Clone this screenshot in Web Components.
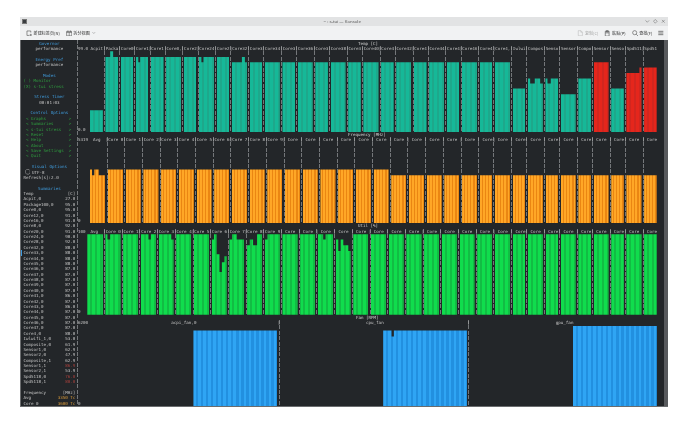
<!doctype html>
<html lang="zh">
<head>
<meta charset="utf-8">
<title>s-tui — Konsole</title>
<style>
  html, body { margin: 0; background: #fff; }
  body { font-family: "Noto Sans", "Noto Sans CJK SC", sans-serif; }
</style>
</head>
<body>
<konsole-window>
  <title-bar slot="title">~ : s-tui — Konsole</title-bar>
  <tool-bar slot="tools"></tool-bar>
  <term-view>
    <stui-sidebar slot="side"></stui-sidebar>
    <graph-panel id="temp"></graph-panel>
    <graph-panel id="freq"></graph-panel>
    <graph-panel id="util"></graph-panel>
    <graph-panel id="fan"></graph-panel>
  </term-view>
</konsole-window>

<script>
class KonsoleWindow extends HTMLElement {
  constructor() {
    super();
    this.attachShadow({ mode: 'open' });
    this.shadowRoot.innerHTML = `
      <style>
        :host {
          display: flex;
          flex-direction: column;
          width: 648px;
          height: 390px;
          margin: 17px 21px 25px 20px;
        }
      </style>
      <slot name="title"></slot>
      <slot name="tools"></slot>
      <slot></slot>
    `;
  }
}

class TitleBar extends HTMLElement {
  constructor() {
    super();
    this.attachShadow({ mode: 'open' });
    this.shadowRoot.innerHTML = `
      <style>
        :host {
          display: flex;
          align-items: center;
          justify-content: space-between;
          height: 8.5px;
          padding: 0 2px 0 2px;
          background: #e2e3e4;
          color: #555;
          font: 4.3px "Noto Sans", sans-serif;
          filter: blur(.2px);
        }
        .app { width: 5px; height: 5px; background: #3a3d40; border: .5px solid #777; box-sizing: border-box; }
        .name { flex: 1; text-align: center; padding-left: 12px; }
        .btns { display: flex; gap: 3.4px; align-items: center; }
        svg { width: 4.6px; height: 4.6px; fill: none; stroke: #555; stroke-width: 1; display: block; }
      </style>
      <div class="app"></div>
      <div class="name"><slot></slot></div>
      <div class="btns">
        <svg viewBox="0 0 10 10"><path d="M1 3l4 4 4-4"/></svg>
        <svg viewBox="0 0 10 10"><path d="M5 1l4 4-4 4-4-4z"/></svg>
        <svg viewBox="0 0 10 10"><path d="M2 2l6 6M8 2l-6 6"/></svg>
      </div>
    `;
  }
}

class ToolBar extends HTMLElement {
  constructor() {
    super();
    this.attachShadow({ mode: 'open' });
    this.shadowRoot.innerHTML = `
      <style>
        :host {
          display: flex;
          align-items: center;
          height: 14.8px;
          padding: 0 4px 0 6px;
          background: #f1f2f3;
          color: #333;
          font: 4.1px "Noto Sans CJK SC", "Noto Sans", sans-serif;
          filter: blur(.2px);
        }
        .item { display: flex; align-items: center; gap: 1.2px; }
        .gap { flex: 1; }
        .off { color: #a8a8a8; }
        svg { width: 6.4px; height: 6.4px; fill: none; stroke: #333; stroke-width: .8; display: block; }
        .off svg { stroke: #b5b5b5; }
        svg.mini { width: 3.6px; height: 3.6px; margin-left: 1.5px; }
      </style>
      <div class="item" style="margin-right:6px">
        <svg viewBox="0 0 10 10"><path d="M7.5 4V1.5h-6v7h4M7.5 6v3.5M5.8 7.8h3.4"/></svg>
        <span>新建标签页(N)</span>
      </div>
      <div class="item">
        <svg viewBox="0 0 10 10"><path d="M1 2.2h8v7H1zM1 3.8h8M5 3.8v5.4M3 .8v2M7 .8v2"/></svg>
        <span>拆分视图</span>
        <svg class="mini" viewBox="0 0 10 10"><path d="M1 3l4 4 4-4"/></svg>
      </div>
      <div class="gap"></div>
      <div class="item off" style="margin-right:6px">
        <svg viewBox="0 0 10 10"><path d="M2 1h4l2.5 2.5V9H2zM6 1v2.5h2.5"/></svg>
        <span>复制(C)</span>
      </div>
      <div class="item" style="margin-right:6px">
        <svg viewBox="0 0 10 10"><path d="M2 2h6v7.5H2zM3.5 1h3v2h-3zM2 4.5h6"/></svg>
        <span>粘贴(P)</span>
      </div>
      <div class="item" style="margin-right:6px">
        <svg viewBox="0 0 10 10"><circle cx="4.2" cy="4.2" r="3.2"/><path d="M6.6 6.6l3 3"/></svg>
        <span>查找(F)</span>
      </div>
      <svg viewBox="0 0 10 10" style="stroke-width:1.1;width:5.6px;height:6px"><path d="M.5 2h9M.5 5h9M.5 8h9"/></svg>
    `;
  }
}

class TermView extends HTMLElement {
  constructor() {
    super();
    this.attachShadow({ mode: 'open' });
    this.shadowRoot.innerHTML = `
      <style>
        :host {
          --c: 2.53px;
          --row: 5.378px;
          display: flex;
          flex: 1;
          min-height: 0;
          overflow: hidden;
          position: relative;
          background: #232629;
          color: #c4c4c4;
          font: 4.2px/5.378px "DejaVu Sans Mono", monospace;
          text-rendering: geometricPrecision;
          border-left: 1px solid #6a6c6e;
          border-bottom: 1px solid #6a6c6e;
          box-sizing: border-box;
          padding-left: 2.4px;
        }
        .inner { display: flex; flex: 1; min-width: 0; filter: blur(.22px); }
        .graphs { flex: none; width: 580px; padding-top: .3px; }
        .scroll { flex: none; width: 4.4px; margin-left: auto; background: #585a5d; }
        .mark { position: absolute; left: 0; top: 210px; width: 1.4px; height: 6px; background: #3d9be0; }
      </style>
      <div class="mark"></div>
      <div class="inner">
        <slot name="side"></slot>
        <div class="graphs"><slot></slot></div>
      </div>
      <div class="scroll"></div>
    `;
  }
}

class StuiSidebar extends HTMLElement {
  constructor() {
    super();
    this.attachShadow({ mode: 'open' });
    const title = (t) => `<div class="r c t">${t}</div>`;
    const val = (t) => `<div class="r c">${t}</div>`;
    const gap = '<div class="r"></div>';
    const menu = (t) => `<div class="r g"> &lt; ${t.padEnd(14, ' ')} &gt;</div>`;
    const pair = (a, b, cls = '') => `<div class="r p"><span>${a}</span><span class="${cls}">${b}</span></div>`;
    const temps = [
      ['Acpit,0', '27.0'], ['Package100,0', '95.0'], ['Core0,0', '95.0'], ['Core12,0', '91.0'],
      ['Core16,0', '91.0'], ['Core8,0', '92.0'], ['Core20,0', '91.0'], ['Core24,0', '90.0'],
      ['Core28,0', '92.0'], ['Core32,0', '88.0'], ['Core33,0', '88.0'], ['Core34,0', '88.0'],
      ['Core35,0', '88.0'], ['Core36,0', '87.0'], ['Core37,0', '87.0'], ['Core38,0', '87.0'],
      ['Core39,0', '87.0'], ['Core40,0', '87.0'], ['Core41,0', '86.0'], ['Core42,0', '87.0'],
      ['Core43,0', '86.0'], ['Core44,0', '87.0'], ['Core45,0', '87.0'], ['Core46,0', '87.0'],
      ['Core47,0', '87.0'], ['Core4,0', '88.0'], ['Iwlwifi_1,0', '53.0'], ['Composite,0', '61.9'],
      ['Sensor1,0', '62.9'], ['Sensor2,0', '47.9'], ['Composite,1', '62.9'], ['Sensor1,1', '86.9', 'red'],
      ['Sensor2,1', '53.9'], ['Spd5118,0', '76.0', 'red'], ['Spd5118,1', '80.0', 'red'],
    ];
    this.shadowRoot.innerHTML = `
      <style>
        :host {
          display: block;
          flex: none;
          width: 52px;
          padding-right: var(--c);
          padding-top: .3px;
          background: repeating-linear-gradient(to bottom, #74777a 0 4px, transparent 4px var(--row)) 53.3px 0 / 1px 100% no-repeat;
        }
        .r { height: var(--row); white-space: pre; }
        .c { text-align: center; }
        .t { color: #3f9bdb; }
        .g { color: #2f9e3f; }
        .p { display: flex; justify-content: space-between; }
        .red { color: #a8403c; }
        .org { color: #d99a3a; }
        .radio { display: flex; align-items: center; gap: 1.6px; padding-left: 1.4px; }
        .radio svg { width: 5.6px; height: 5.6px; fill: none; stroke: #c5c5c5; stroke-width: .8; }
      </style>
      ${title('Governor')}${val('performance')}${gap}
      ${title('Energy Pref')}${val('performance')}${gap}
      ${title('Modes')}
      <div class="r g">( ) Monitor</div>
      <div class="r g">(X) s-tui stress</div>
      ${gap}
      ${title('Stress Timer')}${val('00:01:03')}${gap}
      ${title('Control Options')}
      ${['Graphs', 'Summaries', 's-tui stress', 'Reset', 'Help', 'About', 'Save Settings', 'Quit'].map(menu).join('')}
      ${gap}
      ${title('Visual Options')}
      <div class="r radio"><svg viewBox="0 0 10 10"><path d="M3 .8h4L9.2 3v4L7 9.2H3L.8 7V3z"/></svg><span>UTF-8</span></div>
      <div class="r">Refresh[s]:2.0</div>
      ${gap}
      ${title('Summaries')}
      ${pair('Temp', '[C]')}
      ${temps.map((t) => pair(t[0], t[1], t[2] || '')).join('')}
      ${gap}
      ${pair('Frequency', '[MHz]')}
      ${pair('Avg', '3350 Tc', 'org')}
      ${pair('Core 0', '3600 Tc', 'org')}
    `;
  }
}

class GraphPanel extends HTMLElement {
  constructor() {
    super();
    this.attachShadow({ mode: 'open' });
  }

  set config(cfg) {
    this._config = cfg;
    this.render();
  }

  // steps is a list of [x, top] in px from the bar's left edge
  clip(steps, w) {
    const h = 80.67;
    const pts = [`0 ${h}px`];
    steps.forEach((s, i) => {
      const next = i + 1 < steps.length ? steps[i + 1][0] : w;
      pts.push(`${s[0]}px ${s[1]}px`, `${next}px ${s[1]}px`);
    });
    pts.push(`${w}px ${h}px`);
    return pts.join(',');
  }

  render() {
    const { title, titleX, axis, color, cols } = this._config;
    const c = 2.53;
    const html = cols.map((col, i) => {
      const steps = col.steps || [[0, col.top || 0]];
      const barW = col.barW || (col.cells * c - (i === 0 ? (col.ax || 0) + 0.35 : 2.6));
      const tone = col.color || color;
      return `
        <div class="col ${i === 0 ? 'first' : ''}" style="width:${col.cells * c}px">
          <div class="lab">${col.label}</div>
          <div class="plot">
            ${i === 0 ? `<div class="ax">${axis}</div>` : ''}
            <div class="fill ${tone}" style="width:${barW}px;clip-path:polygon(${this.clip(steps, barW)})"></div>
          </div>
        </div>`;
    }).join('');

    this.shadowRoot.innerHTML = `
      <style>
        :host { display: block; }
        .title { height: var(--row); white-space: pre; color: #d0d0d0; padding-left: ${titleX}px; }
        .cols { display: flex; height: calc(var(--row) * 16); overflow: hidden; }
        .col {
          flex: none;
          background: repeating-linear-gradient(to bottom, #74777a 0 4px, transparent 4px var(--row)) 0.8px 0 / 1px 100% no-repeat;
        }
        .col.first { background: none; }
        .lab { height: var(--row); white-space: pre; overflow: hidden; }
        .plot { height: calc(var(--row) * 15); display: flex; justify-content: flex-end; }
        .ax { margin-right: auto; align-self: flex-end; height: var(--row); white-space: pre; }
        .fill { height: 100%; flex: none; margin-right: .35px; }
        .teal { background: repeating-linear-gradient(90deg, #16b898 0 2.53px, #1ea88b 2.53px 5.06px); }
        .red { background: repeating-linear-gradient(90deg, #e5261c 0 2.53px, #d2261f 2.53px 5.06px); }
        .orange { background: repeating-linear-gradient(90deg, #ffa726 0 1.58px, #ea8612 1.58px 3.16px); }
        .green { background: repeating-linear-gradient(90deg, #10dc4d 0 2.53px, #12bc44 2.53px 5.06px); }
        .blue { background: repeating-linear-gradient(90deg, #2fa5f4 0 2.53px, #2290e0 2.53px 5.06px); }
      </style>
      <div class="title">${title}</div>
      <div class="cols">${html}</div>
    `;
  }
}

customElements.define('konsole-window', KonsoleWindow);
customElements.define('title-bar', TitleBar);
customElements.define('tool-bar', ToolBar);
customElements.define('term-view', TermView);
customElements.define('stui-sidebar', StuiSidebar);
customElements.define('graph-panel', GraphPanel);

// temp: column widths follow the label lengths (label + separator)
const tempNames = ['Packa', 'Core0', 'Core1', 'Core1', 'Core0,', 'Core2', 'Core24', 'Core2', 'Core32', 'Core3',
  'Core34', 'Core3', 'Core36', 'Core3', 'Core38', 'Core3', 'Core40', 'Core4', 'Core42', 'Core4', 'Core44', 'Core4',
  'Core46', 'Core4', 'Core4,', 'Iwlwi', 'Compos', 'Senso', 'Sensor', 'Compo', 'Sensor', 'Senso', 'Spd511', 'Spd51'];
const tempSpecial = {
  0: { steps: [[0, 5.6], [4.7, 0], [7.7, 5.6]] },
  2: { steps: [[0, 5.6], [2.5, 10.9], [4.3, 5.6]] },
  6: { steps: [[0, 5.6], [2.4, 10.9], [4.4, 5.6]] },
  8: { steps: [[0, 10.9], [10, 5.6], [13, 10.9]] },
  25: { top: 37.2 },
  26: { steps: [[0, 27.2], [2.4, 32.2], [7, 27.2], [12.4, 32.2]] },
  27: { steps: [[0, 27.2], [2, 32.2], [5.3, 27.2]] },
  28: { top: 43 },
  29: { top: 27.2 },
  30: { top: 10.9, color: 'red' },
  31: { top: 37.2 },
  32: { steps: [[0, 21.6], [13, 16.2]], color: 'red' },
  33: { top: 16.2, color: 'red' },
};
document.querySelector('#temp').config = {
  title: 'Temp [C]', titleX: 280, axis: '0.0', color: 'teal',
  cols: [
    { cells: 10, ax: 12.1, label: '99.0 Acpit', top: 59 },
    ...tempNames.map((n, i) => ({
      cells: n.length + 1,
      label: '|' + n,
      top: i < 8 ? 5.6 : 10.9,
      ...tempSpecial[i],
    })),
  ],
};

// freq and util: 7-cell columns, then alternating 6 and 7 on the right
const coreLabel = (i, cells) => {
  if (i < 10) return '|Core ' + i;
  return cells === 7 ? '| Core ' : '| Core';
};
const freqCells = [...Array(21).fill(7), 6, 7, 6, 7, 6, 7, 6, 7, 6, 7, 6];
document.querySelector('#freq').config = {
  title: 'Frequency [MHz]', titleX: 270, axis: '0', color: 'orange',
  cols: [
    { cells: 11, ax: 12.1, label: '5319  Avg ', steps: [[0, 26.8], [2, 32.5], [4.3, 26.8], [8.7, 32.5]] },
    ...freqCells.map((cells, i) => ({ cells, label: coreLabel(i, cells), top: i < 16 ? 26.8 : 32.5 })),
  ],
};

const utilCells = [...Array(23).fill(7), 6, 7, 6, 7, 6, 7, 6, 7, 6];
const utilSteps = {
  0: [[0, 0], [2, 5.4], [4.7, 0]],
  2: [[0, 0], [7.6, 5.4], [10, 0]],
  3: [[0, 0], [12.7, 5.4]],
  6: [[0, 5.3], [2.3, 0], [5, 20], [7.8, 37.7], [10.2, 28], [12.8, 22]],
  7: [[0, 5.3], [2.7, 0], [7.3, 5.3]],
  8: [[0, 11], [2.7, 5.3], [6, 11], [10, 0]],
  9: [[0, 5.3], [2.7, 0]],
  12: [[0, 0], [5.3, 5.3], [7.7, 0]],
  13: [[0, 5.3], [2.7, 16.7], [5, 5.3], [7.7, 11], [12.7, 16.7]],
};
document.querySelector('#util').config = {
  title: 'Util [%]', titleX: 280, axis: '0', color: 'green',
  cols: [
    { cells: 10, ax: 9.4, label: '100  Avg ', top: 0 },
    ...utilCells.map((cells, i) => ({ cells, label: coreLabel(i, cells), steps: utilSteps[i] })),
  ],
};

document.querySelector('#fan').config = {
  title: 'Fan [RPM]', titleX: 278, axis: '0', color: 'blue',
  cols: [
    { cells: 79, ax: 0, barW: 84, label: '6200                                 acpi_fan,0', top: 5 },
    { cells: 75, barW: 84, label: '|                                  cpu_fan', steps: [[0, 5], [8.4, 11], [10.7, 5]] },
    { cells: 75, barW: 84, label: '|                                  gpu_fan', top: 0 },
  ],
};
</script>
</body>
</html>
